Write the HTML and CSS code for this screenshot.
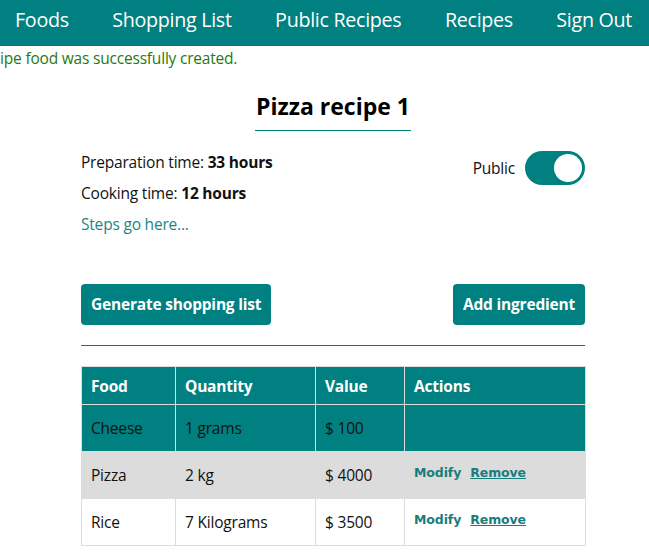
FILE: index.html
```html
<!DOCTYPE html>
<html lang="en">
<head>
<meta charset="utf-8">
<title>Pizza recipe 1</title>
<link rel="stylesheet" href="styles.css">
</head>
<body>
<nav class="nav">
  <a href="#">Foods</a>
  <a href="#">Shopping List</a>
  <a href="#">Public Recipes</a>
  <a href="#">Recipes</a>
  <a href="#">Sign Out</a>
</nav>
<p class="notice">Recipe food was successfully created.</p>
<main class="recipe">
  <div class="title-wrap"><h1 class="title">Pizza recipe 1</h1></div>
  <section class="details">
    <div class="info">
      <p>Preparation time: <b>33 hours</b></p>
      <p>Cooking time: <b>12 hours</b></p>
      <p class="steps">Steps go here...</p>
    </div>
    <label class="public">Public <span class="switch"><span class="knob"></span></span></label>
  </section>
  <div class="actions">
    <button class="btn">Generate shopping list</button>
    <button class="btn">Add ingredient</button>
  </div>
  <hr class="divider">
  <table class="ingredients">
    <colgroup>
      <col class="c1"><col class="c2"><col class="c3"><col class="c4">
    </colgroup>
    <thead>
      <tr><th>Food</th><th>Quantity</th><th>Value</th><th>Actions</th></tr>
    </thead>
    <tbody>
      <tr class="active"><td>Cheese</td><td>1 grams</td><td>$ 100</td><td></td></tr>
      <tr class="grey"><td>Pizza</td><td>2 kg</td><td>$ 4000</td><td><a class="act" href="#">Modify</a><a class="act remove" href="#">Remove</a></td></tr>
      <tr><td>Rice</td><td>7 Kilograms</td><td>$ 3500</td><td><a class="act" href="#">Modify</a><a class="act remove" href="#">Remove</a></td></tr>
    </tbody>
  </table>
</main>
</body>
</html>
```
FILE: styles.css
```css
html, body {
  margin: 0;
  padding: 0;
  background: #fff;
}
body {
  font-family: "Open Sans", "Noto Sans", sans-serif;
  font-size: 15.5px;
  color: #111;
  overflow: hidden;
}
.nav {
  height: 46px;
  box-sizing: border-box;
  background: #008080;
  display: flex;
  align-items: center;
  justify-content: space-between;
  padding: 0 17px 6px 15px;
}
.nav a {
  color: #fff;
  text-decoration: none;
  font-size: 19.7px;
  line-height: 26px;
  letter-spacing: -0.3px;
}
.notice {
  margin: 2px 0 0 -25px;
  color: #1f7a10;
  font-size: 15.5px;
  line-height: 20px;
  letter-spacing: -0.2px;
  white-space: nowrap;
}
.recipe {
  margin-left: 81px;
  width: 504px;
}
.title-wrap {
  margin-top: 22px;
  text-align: center;
}
.title {
  display: inline-block;
  margin: 0;
  font-size: 23px;
  line-height: 32px;
  font-weight: 700;
  padding: 0 1px 8px;
  border-bottom: 1px solid #008080;
  color: #000;
}
.details {
  display: flex;
  justify-content: space-between;
  align-items: flex-start;
  margin-top: 21px;
}
.info p {
  margin: 0 0 10px;
  line-height: 21px;
  letter-spacing: -0.2px;
}
.info p.steps {
  color: #1c8585;
  margin: 0;
}
.info b {
  font-weight: 700;
}
.public {
  display: flex;
  align-items: center;
  gap: 10px;
  margin-top: -1px;
  letter-spacing: -0.2px;
}
.switch {
  width: 60px;
  height: 34px;
  border-radius: 17px;
  background: #008080;
  display: flex;
  align-items: center;
  justify-content: flex-end;
  padding: 0 3px;
  box-sizing: border-box;
}
.knob {
  width: 28px;
  height: 28px;
  border-radius: 50%;
  background: #fff;
}
.actions {
  display: flex;
  justify-content: space-between;
  margin-top: 49px;
}
.btn {
  background: #008080;
  color: #fff;
  border: 0;
  border-radius: 4px;
  padding: 10px 10px;
  font-family: inherit;
  font-size: 15.5px;
  line-height: 21px;
  font-weight: 700;
  letter-spacing: -0.2px;
}
.divider {
  margin: 20px 0 0;
  border: 0;
  border-top: 1px solid #0d7373;
  height: 0;
}
.ingredients {
  margin-top: 20px;
  width: 504px;
  border-collapse: collapse;
  table-layout: fixed;
  font-size: 15.5px;
}
.c1 { width: 94px; }
.c2 { width: 140px; }
.c3 { width: 89px; }
.c4 { width: 181px; }
.ingredients th,
.ingredients td {
  border: 1px solid #dcdcdc;
  text-align: left;
  padding: 0 9px;
  letter-spacing: -0.2px;
}
.ingredients th {
  background: #008080;
  color: #fff;
  font-weight: 700;
  height: 37px;
}
.ingredients td {
  height: 46px;
}
.ingredients tr.active td {
  background: #008080;
  color: #111;
}
.ingredients tr.grey td {
  background: #dcdcdc;
}
.act {
  font-family: "DejaVu Sans", sans-serif;
  font-size: 12.5px;
  font-weight: 700;
  color: #187d7d;
  text-decoration: none;
  position: relative;
  top: -4px;
  letter-spacing: -0.1px;
}
.remove {
  margin-left: 9px;
  text-decoration: underline;
}
```
